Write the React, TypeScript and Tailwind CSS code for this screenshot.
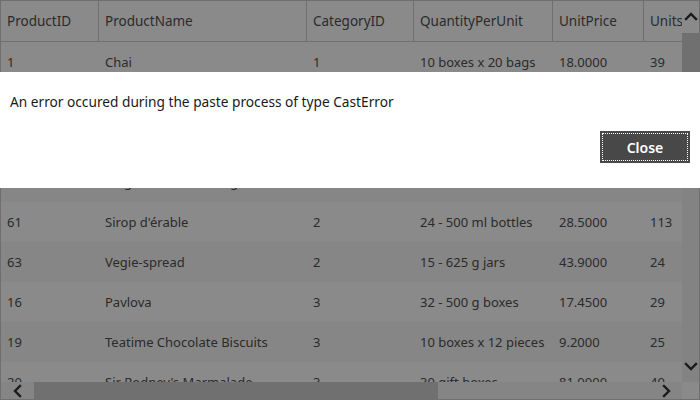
const cols = [
  { key: 'id', label: 'ProductID', w: 'w-[98px]' },
  { key: 'name', label: 'ProductName', w: 'w-[208px]' },
  { key: 'cat', label: 'CategoryID', w: 'w-[107px]' },
  { key: 'qty', label: 'QuantityPerUnit', w: 'w-[139px]' },
  { key: 'price', label: 'UnitPrice', w: 'w-[91px]' },
  { key: 'stock', label: 'UnitsInStock', w: 'w-[120px]' },
] as const;

type Row = { id: string; name: string; cat: string; qty: string; price: string; stock: string };

const rows: Row[] = [
  { id: '1', name: 'Chai', cat: '1', qty: '10 boxes x 20 bags', price: '18.0000', stock: '39' },
  { id: '2', name: 'Chang', cat: '1', qty: '24 - 12 oz bottles', price: '19.0000', stock: '17' },
  { id: '24', name: 'Guaraná Fantástica', cat: '1', qty: '12 - 355 ml cans', price: '4.5000', stock: '20' },
  { id: '77', name: 'Original Frankfurter grüne Soße', cat: '2', qty: '12 boxes', price: '13.0000', stock: '32' },
  { id: '61', name: "Sirop d'érable", cat: '2', qty: '24 - 500 ml bottles', price: '28.5000', stock: '113' },
  { id: '63', name: 'Vegie-spread', cat: '2', qty: '15 - 625 g jars', price: '43.9000', stock: '24' },
  { id: '16', name: 'Pavlova', cat: '3', qty: '32 - 500 g boxes', price: '17.4500', stock: '29' },
  { id: '19', name: 'Teatime Chocolate Biscuits', cat: '3', qty: '10 boxes x 12 pieces', price: '9.2000', stock: '25' },
  { id: '20', name: "Sir Rodney's Marmalade", cat: '3', qty: '30 gift boxes', price: '81.0000', stock: '40' },
];

const font = { fontFamily: '"Noto Sans", "Open Sans", sans-serif' };

function Chevron({ dir }: { dir: 'up' | 'down' | 'left' | 'right' }) {
  const d = {
    up: 'M2 9 L7 4 L12 9',
    down: 'M2 5 L7 10 L12 5',
    left: 'M9 2 L4 7 L9 12',
    right: 'M5 2 L10 7 L5 12',
  }[dir];
  return (
    <svg width="14" height="14" viewBox="0 0 14 14" fill="none">
      <path d={d} stroke="#333" strokeWidth="2.4" strokeLinecap="square" />
    </svg>
  );
}

export default function App() {
  return (
    <div className="relative h-[400px] w-[700px] overflow-hidden bg-white text-[#505050]" style={font}>
      <div className="flex h-full w-full border border-[#cdcdcd]">
        <div className="flex min-w-0 flex-1 flex-col">
          <div className="min-h-0 flex-1 overflow-hidden">
            <div className="flex h-[41px] border-b border-[#cdcdcd] text-[13.5px]">
              {cols.map((c) => (
                <div key={c.key} className={`${c.w} flex shrink-0 items-center border-r border-[#cdcdcd] pl-[6px] whitespace-nowrap`}>
                  {c.label}
                </div>
              ))}
            </div>
            {rows.map((r, i) => (
              <div key={r.id} className={`flex h-[40px] pt-[2px] text-[13px] ${i % 2 ? 'bg-[#f8f8f8]' : 'bg-white'}`}>
                {cols.map((c) => (
                  <div key={c.key} className={`${c.w} flex shrink-0 items-center pl-[6px] whitespace-nowrap`}>
                    {r[c.key]}
                  </div>
                ))}
              </div>
            ))}
          </div>
          <div className="flex h-[17px] shrink-0 items-center bg-[#f6f6f6]">
            <div className="flex w-[33px] items-center justify-center">
              <Chevron dir="left" />
            </div>
            <div className="h-full w-[404px] bg-[#cfcfcf]" />
            <div className="flex-1" />
            <div className="flex w-[32px] items-center justify-center">
              <Chevron dir="right" />
            </div>
          </div>
        </div>
        <div className="flex w-[17px] shrink-0 flex-col">
          <div className="flex flex-1 flex-col bg-[#f2f2f2]">
            <div className="flex h-[32px] items-center justify-center bg-white">
              <Chevron dir="up" />
            </div>
            <div className="h-[42px] bg-[#cfcfcf]" />
            <div className="flex-1" />
            <div className="flex h-[32px] items-center justify-center">
              <Chevron dir="down" />
            </div>
          </div>
          <div className="h-[17px] bg-white" />
        </div>
      </div>

      <div className="absolute inset-0 bg-black/[0.46]" />

      <div className="absolute inset-x-0 top-[72px] flex h-[116px] flex-col bg-white px-[10px] pb-[25px]">
        <p className="mt-[20px] text-[13.7px] leading-[20px] text-[#1a1a1a]">
          An error occured during the paste process of type CastError
        </p>
        <div className="mt-auto flex justify-end">
          <button className="h-[32px] w-[90px] bg-[#484848] p-[2px] text-[14px] font-semibold text-white">
            <span className="flex h-full w-full items-center justify-center border border-dotted border-white">
              Close
            </span>
          </button>
        </div>
      </div>
    </div>
  );
}
